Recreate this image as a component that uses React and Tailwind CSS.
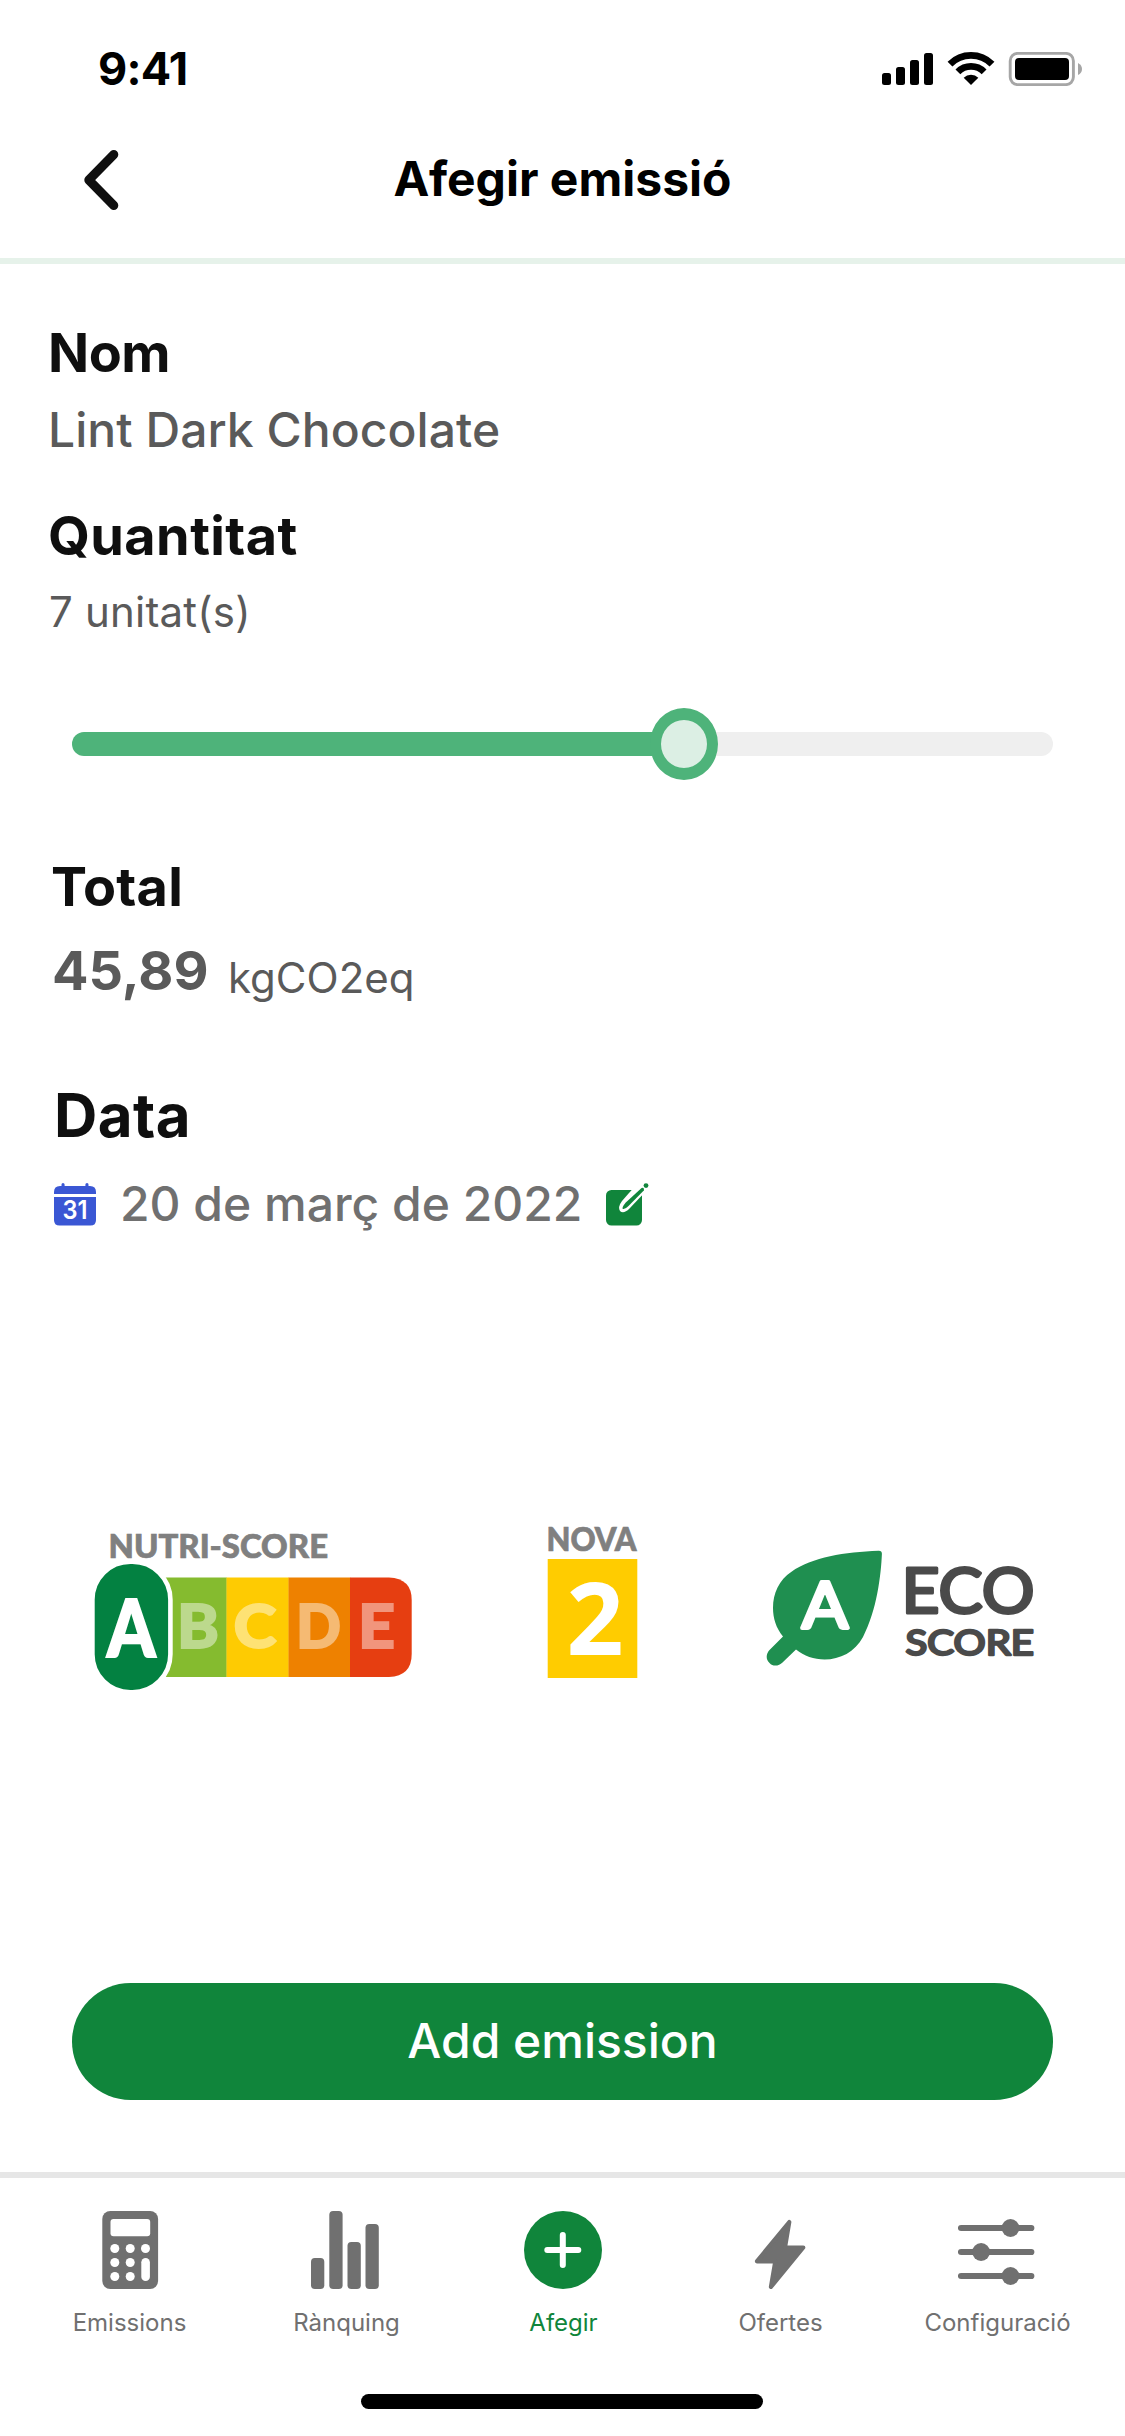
import React from "react";

const NAV_GRAY = "#707070";
const GREEN = "#10853b";

function StatusIcons() {
  return (
    <svg className="mt-[10px] h-[34px] w-[200px]" viewBox="882 52 200 34">
      <rect x="882" y="73" width="9" height="12" rx="2.5" />
      <rect x="896" y="67" width="9" height="18" rx="2.5" />
      <rect x="910" y="60" width="9" height="25" rx="2.5" />
      <rect x="924" y="53" width="9" height="32" rx="2.5" />
      <g fill="none" stroke="#000">
        <path d="M950 64.2 A29.6 29.6 0 0 1 992 64.2" strokeWidth="6.8" />
        <path d="M957.9 71.8 A18.5 18.5 0 0 1 984.1 71.8" strokeWidth="6.8" />
      </g>
      <path d="M971 85 L963.7 77.7 A10.3 10.3 0 0 1 978.3 77.7 Z" />
      <rect x="1010.2" y="53.4" width="63.2" height="31.2" rx="7.5" fill="none" stroke="#a6a6a6" strokeWidth="2.9" />
      <rect x="1015" y="58" width="54" height="22" rx="4" />
      <path d="M1078 63 Q1082 65 1082 69 Q1082 73 1078 75 Z" fill="#a6a6a6" />
    </svg>
  );
}

function CalendarIcon() {
  return (
    <svg className="h-[44px] w-[42px]" viewBox="54 1182 42 44">
      <path d="M54 1194 V1192 Q54 1186 60 1186 H61.5 V1184.5 Q61.5 1183 63 1183 T64.6 1184.5 V1186 H85.4 V1184.5 Q85.4 1183 87 1183 T88.5 1184.5 V1186 H90 Q96 1186 96 1192 V1194 Z" fill="#3a57d4" />
      <path d="M54 1197 H96 V1220 Q96 1225.5 90.5 1225.5 H59.5 Q54 1225.5 54 1220 Z" fill="#3a57d4" />
      <text x="62.5" y="1219" fontFamily="Inter, sans-serif" fontWeight="600" fontSize="25.5" fill="#fff" textLength="25" lengthAdjust="spacingAndGlyphs">31</text>
    </svg>
  );
}

function EditIcon() {
  return (
    <svg className="h-[44px] w-[43px]" viewBox="606 1182 43 44">
      <rect x="606" y="1190" width="36" height="35.5" rx="5.5" fill={GREEN} />
      <path d="M636.5 1184.5 L622 1201 Q617.5 1207 620 1211 Q623.5 1214.5 629.5 1208.5 L648 1189 Z" fill="#fff" />
      <path d="M641.6 1188 L625.8 1202.5 Q622 1207 622.6 1208.8 Q624.5 1210 628.5 1206 L643.8 1190.6 Q644.5 1187 641.6 1188 Z" fill={GREEN} />
      <circle cx="646" cy="1185.6" r="2.4" fill={GREEN} />
    </svg>
  );
}

function NutriScore() {
  return (
    <svg className="h-[180px] w-[326px]" viewBox="90 1520 326 180" fontFamily="Lato, sans-serif" fontWeight="900">
      <text x="108.5" y="1557.5" fontSize="31.5" fill="#808080" stroke="#808080" strokeWidth="0.7" textLength="219.5" lengthAdjust="spacingAndGlyphs">NUTRI-SCORE</text>
      <rect x="150" y="1577.5" width="76.8" height="99.5" fill="#85bb2f" />
      <rect x="226.5" y="1577.5" width="62.3" height="99.5" fill="#fecb02" />
      <rect x="288.5" y="1577.5" width="61.8" height="99.5" fill="#ee8100" />
      <path d="M350 1577.5 H389 Q411.7 1578.5 411.7 1600 V1654 Q411.7 1676 389 1677 H350 Z" fill="#e63e11" />
      <g fontSize="60.5" fill="#fff" stroke="#fff" strokeWidth="1.8" opacity="0.45">
        <text x="177" y="1648" textLength="42" lengthAdjust="spacingAndGlyphs">B</text>
        <text x="233.5" y="1648" textLength="43" lengthAdjust="spacingAndGlyphs">C</text>
        <text x="296" y="1648" textLength="45" lengthAdjust="spacingAndGlyphs">D</text>
        <text x="358" y="1648" textLength="37" lengthAdjust="spacingAndGlyphs">E</text>
      </g>
      <rect x="92.4" y="1561.7" width="78" height="130.6" rx="38" fill="#038141" stroke="#fff" strokeWidth="4.6" />
      <text x="107" y="1657" fontSize="80" fill="#fff" stroke="#fff" strokeWidth="2" textLength="48.5" lengthAdjust="spacingAndGlyphs">A</text>
    </svg>
  );
}

function NovaScore() {
  return (
    <svg className="h-[180px] w-[102px]" viewBox="541.5 1520 102 180">
      <text x="546" y="1551" fontFamily="Lato, sans-serif" fontWeight="900" fontSize="31.5" fill="#808080" stroke="#808080" strokeWidth="0.7" textLength="90" lengthAdjust="spacingAndGlyphs">NOVA</text>
      <rect x="547.2" y="1559" width="89.6" height="119" fill="#ffcc00" />
      <text x="566" y="1655" fontFamily="'Open Sans', sans-serif" fontWeight="700" fontSize="100" fill="#fff">2</text>
    </svg>
  );
}

function EcoScore() {
  return (
    <svg className="h-[180px] w-[270px]" viewBox="766 1520 270 180" fontFamily="Lato, sans-serif" fontWeight="400" strokeLinejoin="round" strokeLinecap="round">
      <path
        fill="#1f8f50"
        d="M878.5 1550.7 Q882 1550.5 881.9 1554 C881 1575 877 1610 863 1637 C855 1652 840 1659.5 824.6 1659.5 C814 1659.5 804 1656 796 1649.5 L782.5 1662.5 C779 1666 773 1667 769.5 1663 C765.5 1659 766 1654 769.5 1650 L783 1636.5 C776 1628 773 1618 773 1608 C773 1593 779 1580 791.5 1571.7 C812 1557 845 1552 878.5 1550.7 Z"
      />
      <text x="802" y="1627.5" fontSize="63" fill="#fff" stroke="#fff" strokeWidth="3.8" textLength="46" lengthAdjust="spacingAndGlyphs">A</text>
      <text x="901.5" y="1613.3" fontSize="61" fill="#4a4a4a" stroke="#4a4a4a" strokeWidth="3" textLength="133" lengthAdjust="spacingAndGlyphs">ECO</text>
      <text x="905.5" y="1655" fontSize="34.5" fill="#4a4a4a" stroke="#4a4a4a" strokeWidth="2.4" textLength="128.5" lengthAdjust="spacingAndGlyphs">SCORE</text>
    </svg>
  );
}

const navItems = [
  {
    label: "Emissions",
    viewBox: "89.5 2211 78 78",
    icon: (
      <>
        <rect x="101.8" y="2211" width="55.8" height="78" rx="8" />
        <g fill="#fff">
          <rect x="110" y="2219" width="39.7" height="17.3" rx="3" />
          {[2248.5, 2262.5, 2276.5].map((cy) => (
            <React.Fragment key={cy}>
              <circle cx="114.3" cy={cy} r="4.5" />
              <circle cx="129.7" cy={cy} r="4.5" />
            </React.Fragment>
          ))}
          <circle cx="145" cy="2248.5" r="4.5" />
          <rect x="140.8" y="2258" width="8.6" height="23" rx="4.3" />
        </g>
      </>
    ),
  },
  {
    label: "Rànquing",
    viewBox: "306.5 2211 78 78",
    icon: (
      <>
        <rect x="310.5" y="2258" width="13.3" height="31" rx="3.8" />
        <rect x="328.8" y="2211" width="13.3" height="78" rx="3.8" />
        <rect x="347" y="2242" width="13.3" height="47" rx="3.8" />
        <rect x="365" y="2224" width="13.3" height="65" rx="3.8" />
      </>
    ),
  },
  {
    label: "Afegir",
    active: true,
    viewBox: "524 2211 78 78",
    icon: (
      <>
        <circle cx="563" cy="2250" r="39" />
        <path d="M547.3 2250 H578.3 M562.8 2235 V2265" stroke="#fff" strokeWidth="6" strokeLinecap="round" />
      </>
    ),
  },
  {
    label: "Ofertes",
    viewBox: "740.5 2211 78 78",
    icon: (
      <path
        d="M788.8 2222 L784.5 2247.5 H802.8 L770.4 2287 L774.8 2261.3 H756.4 Z"
        stroke={NAV_GRAY}
        strokeWidth="4.2"
        strokeLinejoin="round"
      />
    ),
  },
  {
    label: "Configuració",
    viewBox: "957.5 2211 78 78",
    icon: (
      <g>
        <path d="M960.5 2228 H1030.8 M960.5 2252 H1030.8 M960.5 2276 H1030.8" stroke={NAV_GRAY} strokeWidth="6.2" strokeLinecap="round" />
        <circle cx="1010" cy="2228" r="8.9" />
        <circle cx="980.6" cy="2252" r="8.9" />
        <circle cx="1010" cy="2276" r="8.9" />
      </g>
    ),
  },
];

export default function App() {
  return (
    <div className="flex h-[2436px] w-[1125px] flex-col overflow-hidden bg-white font-[Inter,sans-serif] text-[#0f0f0f]">
      <header className="h-[264px] shrink-0 border-b-[6px] border-[#e6f2ea] text-black">
        <div className="flex h-[149px] items-start justify-between pt-[42px] pr-[43px] pl-[98px]">
          <span className="text-[45px] leading-[54px] font-bold tracking-[-0.7px]">9:41</span>
          <StatusIcons />
        </div>
        <div className="grid h-[62px] grid-cols-[84px_1fr_84px] items-start">
          <span />
          <div className="grid grid-cols-[34px_1fr_34px]">
            <svg className="h-[62px] w-[35px]" viewBox="84 149 35 62" fill="none" stroke="#0f0f0f" strokeWidth="9" strokeLinecap="round" strokeLinejoin="round">
              <path d="M113.8 154.5 L88.8 180 L113.8 205.5" />
            </svg>
            <h1 className="text-center text-[48px] leading-[60px] font-bold">Afegir emissió</h1>
          </div>
        </div>
      </header>

      <main className="flex h-[1908px] shrink-0 flex-col pt-[56px]">
        <section className="pl-12">
          <h2 className="text-[54px] leading-[66px] font-bold tracking-[-0.5px]">Nom</h2>
          <p className="mt-[14px] text-[48px] leading-[60px] font-medium tracking-[0.05px] text-[#5a5a5a]">Lint Dark Chocolate</p>
        </section>
        <section className="mt-[43px] pl-12">
          <h2 className="text-[54px] leading-[66px] font-bold tracking-[0.4px]">Quantitat</h2>
          <p className="mt-[18px] pl-px text-[42px] leading-[50px] tracking-[0.2px] text-[#5a5a5a]">7 unitat(s)</p>
        </section>

        <div className="mx-[72px] mt-[71px] flex h-[72px] items-center">
          <div className="h-6 w-[588px] rounded-l-full bg-[#4eb37a]" />
          <div className="z-10 -mx-[10px] h-[72px] w-[68px] shrink-0 rounded-[50%] border-x-[11px] border-y-[12px] border-[#4eb37a] bg-[#dcefe4]" />
          <div className="h-6 flex-1 rounded-r-full bg-[#efefef]" />
        </div>

        <section className="mt-[74px] pl-[51px]">
          <h2 className="text-[54px] leading-[66px] font-bold tracking-[0.2px]">Total</h2>
          <div className="mt-[18px] flex h-[66px] items-start pl-px text-[#5a5a5a]">
            <span className="w-[176px] text-[54px] leading-[66px] font-bold">45,89</span>
            <span className="mt-[15px] text-[42px] leading-[50px]">kgCO2eq</span>
          </div>
        </section>

        <section className="mt-[75px] pl-[54px]">
          <h2 className="text-[60px] leading-[72px] font-bold tracking-[0.4px]">Data</h2>
          <div className="mt-[23px] flex h-[60px] items-center">
            <CalendarIcon />
            <span className="ml-6 w-[486px] text-[48px] leading-[60px] font-medium text-[#707070]">20 de març de 2022</span>
            <EditIcon />
          </div>
        </section>

        <section className="mt-[286px] flex items-start pl-[90px]">
          <NutriScore />
          <div className="ml-[125.5px]">
            <NovaScore />
          </div>
          <div className="ml-[122.5px]">
            <EcoScore />
          </div>
        </section>

        <button className="mx-[72px] mt-[283px] h-[117px] shrink-0 rounded-full bg-[#10853b] pb-[2px] text-[48px] leading-[60px] font-medium text-white">
          Add emission
        </button>
      </main>

      <footer className="flex flex-1 flex-col items-center border-t-[6px] border-[#e6e6e6]">
        <nav className="grid w-full grid-cols-[repeat(5,217px)] pt-[33px] pl-5">
          {navItems.map((item) => (
            <div key={item.label} className="flex flex-col items-center">
              <svg className="h-[78px] w-[78px]" viewBox={item.viewBox} fill={item.active ? GREEN : NAV_GRAY}>
                {item.icon}
              </svg>
              <span className={item.active ? "mt-[19px] pl-[2px] text-[24px] leading-[30px] text-[#10853b]" : "mt-[19px] pl-[2px] text-[24px] leading-[30px] text-[#707070]"}>
                {item.label}
              </span>
            </div>
          ))}
        </nav>
        <div className="mt-[56px] mr-px h-[15px] w-[402px] rounded-full bg-black" />
      </footer>
    </div>
  );
}
